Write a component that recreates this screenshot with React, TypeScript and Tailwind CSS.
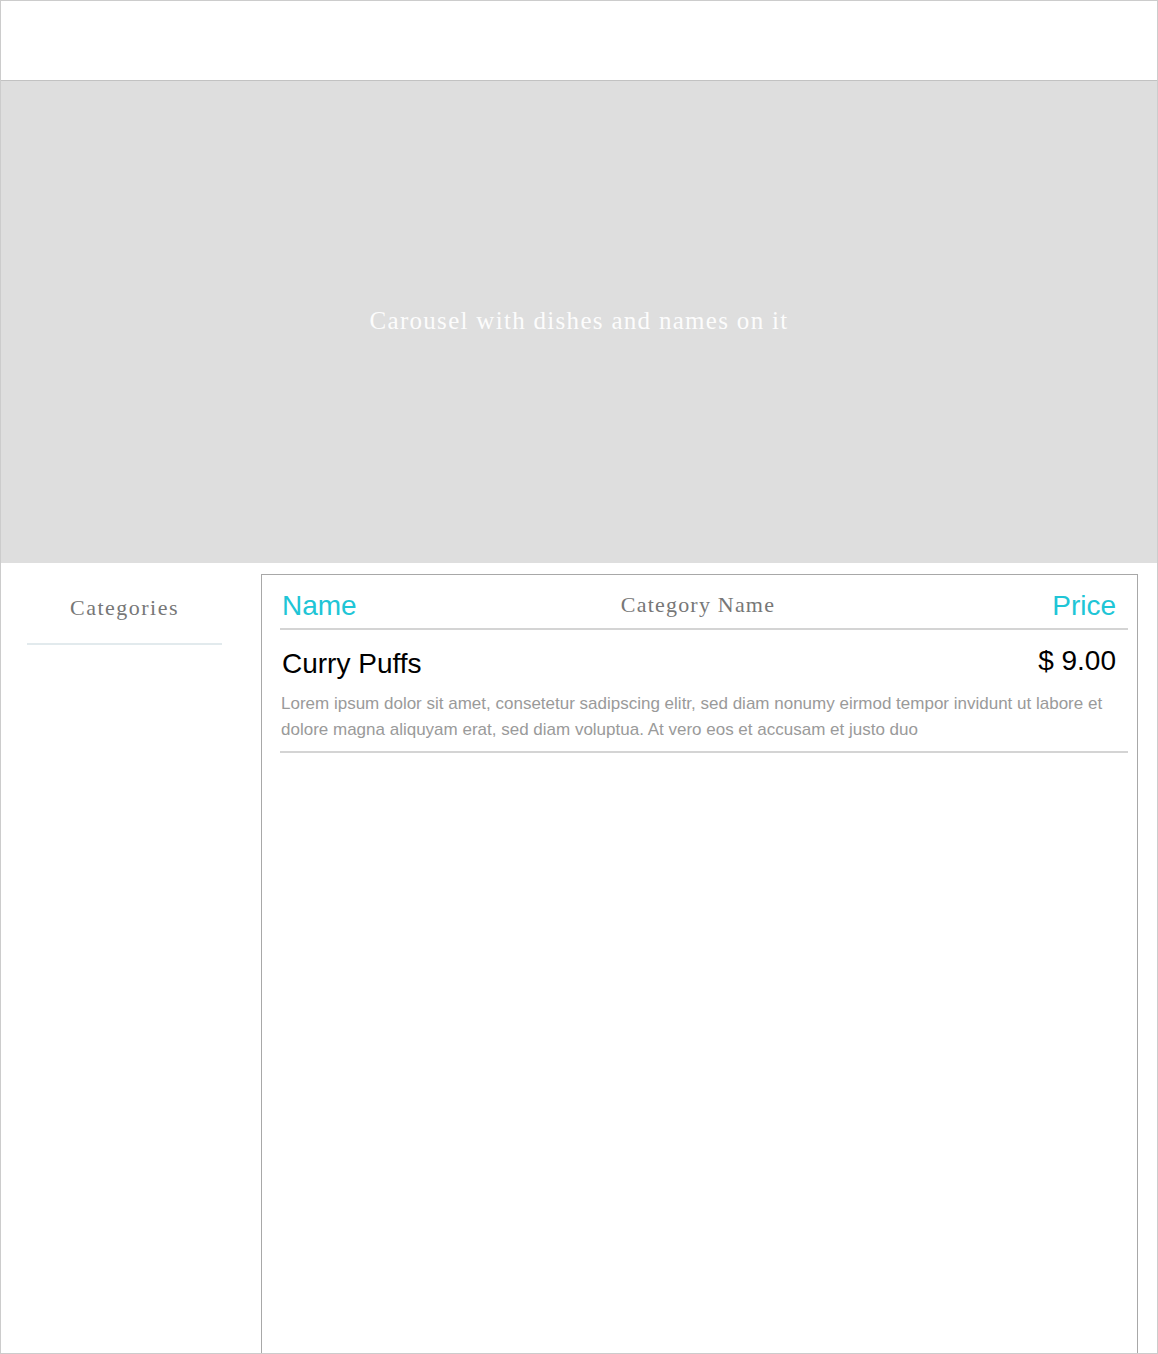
import React from "react";

const serif = "font-['Liberation_Serif',serif]";
const sans = "font-['Liberation_Sans',Arial,sans-serif]";

function MenuItem({ name, price, description }: { name: string; price: string; description: string }) {
  return (
    <div className="pt-[18px] pb-[8px] border-b-2 border-[#d4d4d4]">
      <div className="flex items-start justify-between pr-[12px]">
        <h3 className={`${sans} text-[28px] leading-[32px] text-black pl-[2px]`}>{name}</h3>
        <span className={`${sans} text-[28px] leading-[32px] text-black -mt-[3px]`}>{price}</span>
      </div>
      <p className={`${sans} mt-[11px] text-[17px] leading-[26px] text-[#9a9a9a] pl-[1px] pr-[12px]`}>
        {description}
      </p>
    </div>
  );
}

export default function App() {
  return (
    <div className="w-[1158px] h-[1354px] border border-[#cccccc] flex flex-col overflow-hidden bg-white">
      {/* Header */}
      <header className="h-[80px] shrink-0 border-b border-[#c2c2c2]"></header>

      {/* Carousel placeholder */}
      <section className="h-[482px] shrink-0 bg-[#dedede] flex items-center justify-center">
        <p className={`${serif} text-[25px] tracking-[1.3px] text-white/95 -mt-[2px]`}>Carousel with dishes and names on it</p>
      </section>

      {/* Body */}
      <div className="flex flex-1 pt-[11px] min-h-0">
        <aside className="w-[260px] shrink-0 pl-[26px] pr-[39px]">
          <div className="pt-[21px] pb-[22px] border-b-2 border-[#e2eaed] text-center">
            <h2 className={`${serif} text-[22px] leading-[26px] tracking-[1.5px] text-[#777777]`}>Categories</h2>
          </div>
        </aside>

        <main className="flex-1 mr-[19px] border-l border-t border-r border-[#a8a8a8] pl-[18px] pr-[9px]">
          <div className="h-[55px] flex items-center border-b-2 border-[#d4d4d4]">
            <span className={`${sans} flex-1 text-[28px] leading-[32px] text-[#20c5d6] pl-[2px] pt-[8px]`}>Name</span>
            <span className={`${serif} text-[22px] tracking-[1.2px] text-[#777777] pr-[2px] pt-[5px]`}>Category Name</span>
            <span className={`${sans} flex-1 text-right text-[28px] leading-[32px] text-[#20c5d6] pr-[12px] pt-[8px]`}>Price</span>
          </div>
          <MenuItem
            name="Curry Puffs"
            price="$ 9.00"
            description="Lorem ipsum dolor sit amet, consetetur sadipscing elitr, sed diam nonumy eirmod tempor invidunt ut labore et dolore magna aliquyam erat, sed diam voluptua. At vero eos et accusam et justo duo"
          />
        </main>
      </div>
    </div>
  );
}
